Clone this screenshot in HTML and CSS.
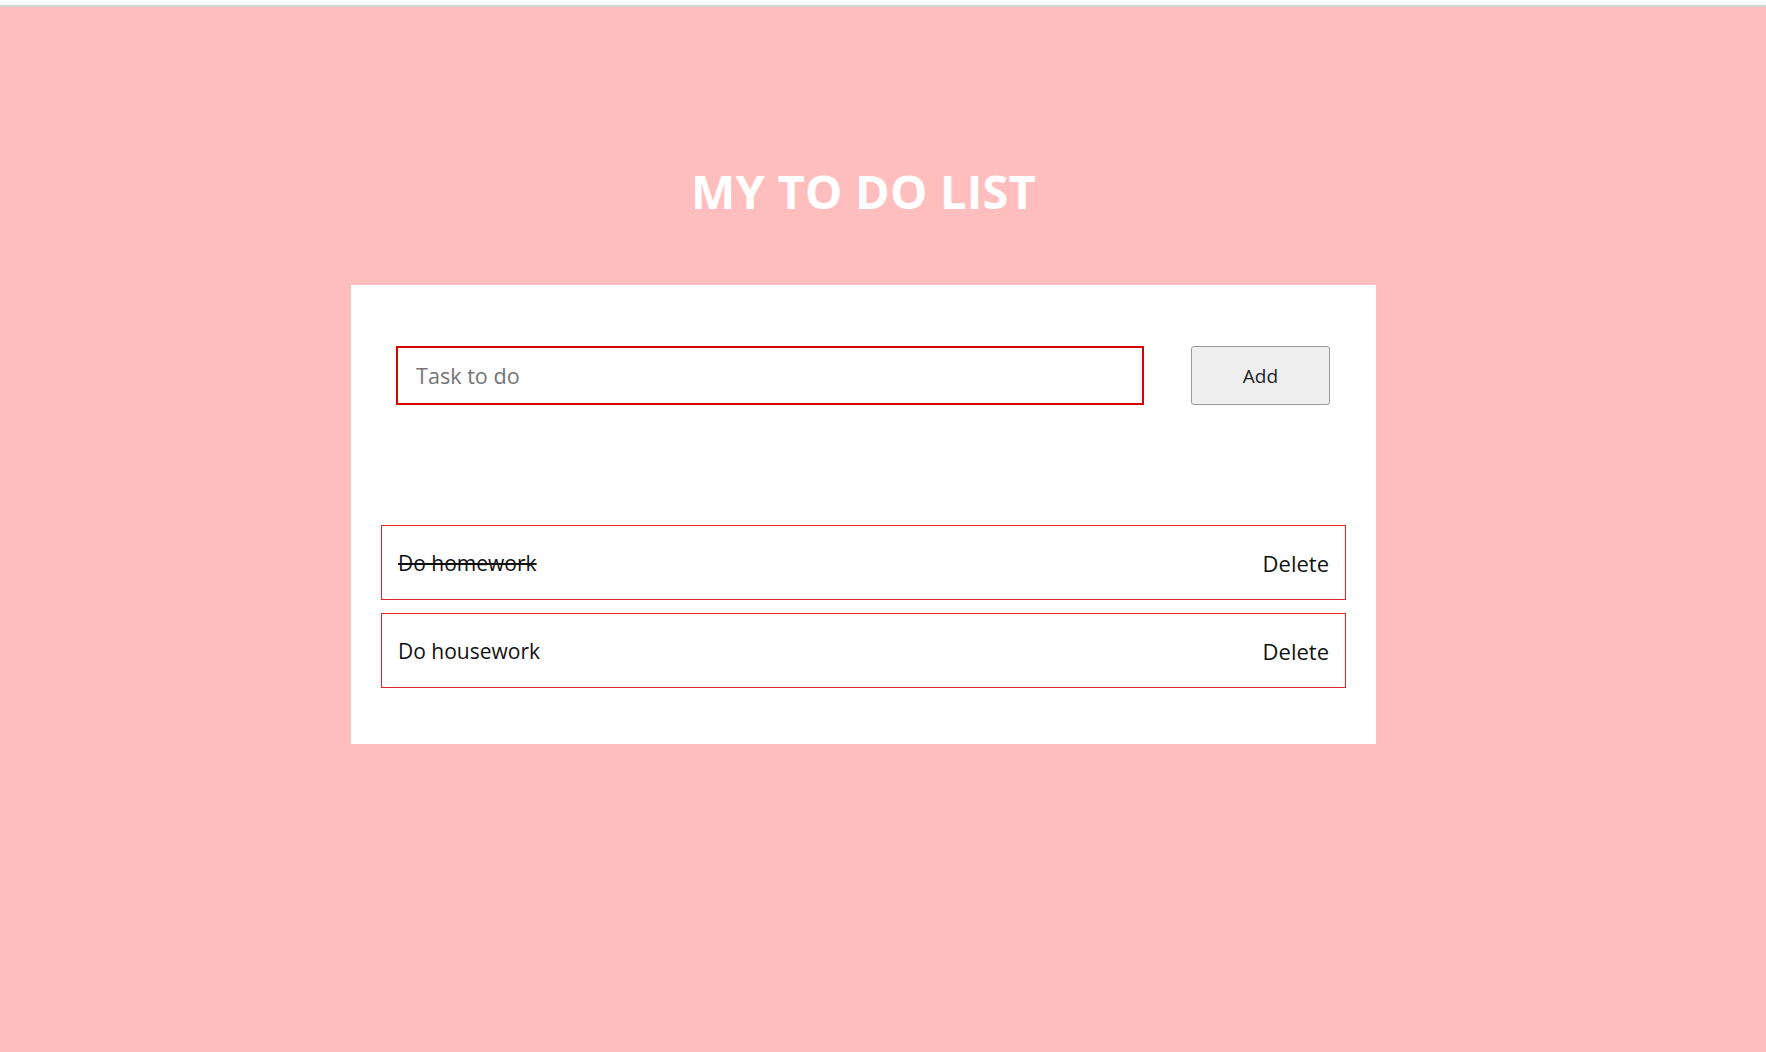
FILE: index.html
```html
<!DOCTYPE html>
<html lang="en">
<head>
<meta charset="utf-8">
<title>My To Do List</title>
<link rel="stylesheet" href="styles.css">
</head>
<body>
<div class="topbar"></div>
<div class="page">
  <h1 class="title">MY TO DO LIST</h1>
  <div class="card">
    <form class="entry">
      <input class="task-input" type="text" placeholder="Task to do">
      <button class="add-btn" type="button">Add</button>
    </form>
    <ul class="list">
      <li class="item"><span class="item-text done">Do homework</span><span class="delete">Delete</span></li>
      <li class="item"><span class="item-text">Do housework</span><span class="delete">Delete</span></li>
    </ul>
  </div>
</div>
</body>
</html>
```

FILE: styles.css
```css
html, body {
  margin: 0;
  padding: 0;
}
body {
  background: #ffbebe;
  font-family: "Open Sans", "Noto Sans", sans-serif;
  height: 1052px;
  overflow: hidden;
}
.topbar {
  height: 5px;
  background: #ffffff;
  border-bottom: 2px solid #d4d4d4;
}
.page {
  width: 1727px;
  display: flex;
  flex-direction: column;
  align-items: center;
}
.title {
  margin: 156px 0 0;
  height: 122px;
  color: #ffffff;
  font-size: 47px;
  font-weight: 700;
  line-height: 56px;
  letter-spacing: 0.2px;
}
.card {
  width: 1025px;
  height: 459px;
  box-sizing: border-box;
  background: #ffffff;
  padding: 61px 30px 0;
}
.entry {
  display: flex;
  justify-content: space-between;
  margin: 0 16px 0 15px;
}
.task-input {
  width: 748px;
  height: 59px;
  box-sizing: border-box;
  border: 2px solid #d90000;
  padding: 0 18px;
  font-family: inherit;
  font-size: 21.6px;
  color: #333;
  outline: none;
}
.task-input::placeholder {
  color: #757575;
}
.add-btn {
  width: 139px;
  height: 59px;
  box-sizing: border-box;
  background: #efefef;
  border: 1px solid #9a9a9a;
  border-radius: 3px;
  font-family: inherit;
  font-size: 19px;
  color: #222;
}
.list {
  list-style: none;
  margin: 120px 0 0;
  padding: 0;
  display: flex;
  flex-direction: column;
  gap: 13px;
}
.item {
  height: 75px;
  box-sizing: border-box;
  border: 1px solid #e0262e;
  display: flex;
  align-items: center;
  justify-content: space-between;
  padding: 0 16px 0 16px;
  font-size: 21px;
  color: #111;
}
.delete {
  font-size: 22px;
}
.item-text.done {
  text-decoration: line-through;
}
```
